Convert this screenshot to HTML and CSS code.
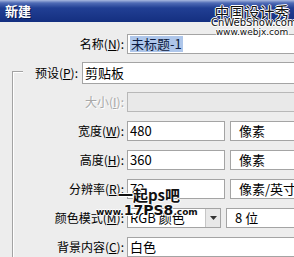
FILE: index.html
```html
<!DOCTYPE html>
<html>
<head>
<meta charset="utf-8">
<link rel="stylesheet" href="styles.css">
</head>
<body>
<div class="dialog">
  <div class="title">新建</div>
  <div class="form">
    <div class="row">
      <span class="label">名称(<u>N</u>):</span>
      <div class="box wide"><span class="sel">未标题-1</span></div>
    </div>
    <div class="group">
      <div class="row preset">
        <span class="label">预设(<u>P</u>):</span>
        <div class="box wide">剪贴板</div>
      </div>
      <div class="row">
        <span class="label disabled">大小(<u>I</u>):</span>
        <div class="box wide off"></div>
      </div>
      <div class="row">
        <span class="label">宽度(<u>W</u>):</span>
        <div class="box num">480</div>
        <div class="box unit">像素</div>
      </div>
      <div class="row">
        <span class="label">高度(<u>H</u>):</span>
        <div class="box num">360</div>
        <div class="box unit">像素</div>
      </div>
      <div class="row">
        <span class="label">分辨率(<u>R</u>):</span>
        <div class="box num">72</div>
        <div class="box unit">像素/英寸</div>
      </div>
      <div class="row">
        <span class="label">颜色模式(<u>M</u>):</span>
        <div class="box combo"><span class="ctext">RGB 颜色</span><span class="arrow"><svg width="7" height="4" viewBox="0 0 7 4"><path d="M0 0H7L3.5 4Z" fill="#333"/></svg></span></div>
        <div class="box unit">8 位</div>
      </div>
      <div class="row">
        <span class="label">背景内容(<u>C</u>):</span>
        <div class="box wide">白色</div>
      </div>
    </div>
  </div>
  <div class="wm-top">
    <div class="wm-cn">中国设计秀</div>
    <div class="wm-en">CnWebShow.com</div>
    <div class="wm-en2">www.webjx.com</div>
  </div>
  <div class="wm-mid">
    <div class="wm-a">一起ps吧</div>
    <div class="wm-b">www.<b>17PS8</b>.com</div>
  </div>
</div>
</body>
</html>
```
FILE: styles.css
```css
html, body {
  margin: 0;
  padding: 0;
}
body {
  width: 294px;
  height: 257px;
  overflow: hidden;
  background: #ededed;
  font-family: "Noto Sans CJK SC", "DejaVu Sans", sans-serif;
  font-size: 12px;
  color: #000;
}
.dialog {
  position: relative;
  width: 294px;
  height: 257px;
  overflow: hidden;
}
.title {
  height: 22px;
  line-height: 22px;
  padding-left: 5px;
  color: #fff;
  font-weight: bold;
  font-size: 13px;
  background: linear-gradient(#a9b9e0 0, #4f6bb5 3px, #213f94 8px, #142f80 100%);
  text-shadow: 1px 1px 0 #0a1a50;
}
.form {
  padding-top: 7px;
}
.row {
  height: 29px;
  display: flex;
  align-items: center;
}
.label {
  width: 124px;
  text-align: right;
  flex: none;
  line-height: 14px;
}
.disabled {
  color: #a8a8a8;
  text-shadow: 1px 1px 0 #fff;
}
.group {
  position: relative;
}
.group::before {
  content: "";
  position: absolute;
  left: 12px;
  top: 13px;
  bottom: -20px;
  width: 10px;
  border-left: 1px solid #a3a3a3;
  border-top: 1px solid #a3a3a3;
  box-shadow: inset 1px 1px 0 #fff;
}
.preset .label {
  width: 78px;
}
.preset .box {
  margin-left: 4px;
  height: 22px;
}
.box {
  margin-left: 3px;
  height: 20px;
  box-sizing: border-box;
  border: 1px solid #a4a4a4;
  background: #fff;
  display: flex;
  align-items: center;
  padding-left: 2px;
  font-size: 13px;
  white-space: nowrap;
  flex: none;
}
.wide {
  flex: 1 0 auto;
  margin-right: -30px;
}
.off {
  background: #e9e9e9;
  border-color: #b8b8b8;
}
.num {
  width: 98px;
}
.unit {
  margin-left: 5px;
  width: 80px;
  padding-left: 8px;
}
.combo {
  width: 94px;
  padding-right: 0;
  justify-content: space-between;
}
.arrow {
  width: 15px;
  height: 18px;
  box-sizing: border-box;
  border-left: 1px solid #c6c6c6;
  background: #e8e8e8;
  display: flex;
  align-items: center;
  justify-content: center;
}
.sel {
  background: #aec6ea;
  color: #0c1a40;
  padding: 0 1px;
  line-height: 16px;
}
.wm-top {
  position: absolute;
  left: 211px;
  top: 4px;
  width: 82px;
  text-align: center;
  color: #111;
  line-height: 1;
}
.wm-cn {
  font-size: 15px;
  text-shadow: -1px 0 #fff, 1px 0 #fff, 0 -1px #fff, 0 1px #fff;
}
.wm-en {
  font-family: "DejaVu Sans", sans-serif;
  font-size: 10px;
  margin-top: -1px;
  text-shadow: -1px 0 #fff, 1px 0 #fff, 0 -1px #fff, 0 1px #fff;
}
.wm-en2 {
  font-family: "DejaVu Sans", sans-serif;
  font-size: 9px;
  text-shadow: -1px 0 #fff, 1px 0 #fff, 0 -1px #fff, 0 1px #fff;
}
.wm-mid {
  position: absolute;
  left: 96px;
  top: 187px;
  color: #111;
  line-height: 1;
}
.wm-a {
  margin-left: 22px;
  font-size: 15px;
  font-weight: bold;
  text-shadow: -1px 0 #fff, 1px 0 #fff, 0 -1px #fff, 0 1px #fff;
}
.wm-b {
  font-family: "DejaVu Sans", sans-serif;
  font-size: 9px;
  font-weight: bold;
  margin-top: 1px;
  text-shadow: -1px 0 #fff, 1px 0 #fff, 0 -1px #fff, 0 1px #fff;
}
.wm-b b {
  font-size: 14px;
}
```
